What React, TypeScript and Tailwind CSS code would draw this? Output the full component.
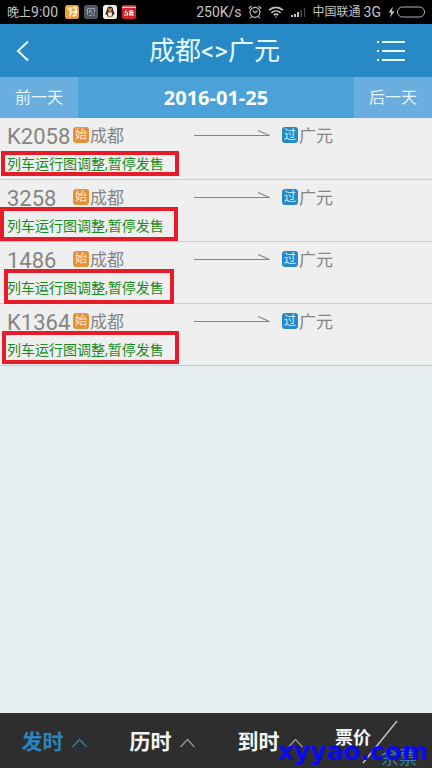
type Train = {
  no: string;
  from: string;
  to: string;
  notice: string;
  frame: string;
};

const NOTICE = "列车运行图调整,暂停发售";

const trains: Train[] = [
  { no: "K2058", from: "成都", to: "广元", notice: NOTICE, frame: "left-px top-[33px] w-[178px] h-[25px]" },
  { no: "3258", from: "成都", to: "广元", notice: NOTICE, frame: "left-0 top-[27px] w-[178px] h-[34px]" },
  { no: "1486", from: "成都", to: "广元", notice: NOTICE, frame: "left-1 top-[27px] w-[170px] h-[35px]" },
  { no: "K1364", from: "成都", to: "广元", notice: NOTICE, frame: "left-0.5 top-[27px] w-[177px] h-[33px]" },
];

const sorts = [
  { label: "发时", active: true },
  { label: "历时", active: false },
  { label: "到时", active: false },
];

function AppIcons() {
  return (
    <div className="flex gap-[5px] ml-[7px]">
      <svg width="14" height="14" viewBox="0 0 14 14">
        <rect width="14" height="14" rx="2.5" fill="#ee9d35" />
        <path d="M2.5 3.5h4L5 6.5l1 1-1.500 4M8 2.500h3v3L8.500 7h3L10 10.500H7.500" fill="none" stroke="#fdf1d2" strokeWidth="1.800" />
      </svg>
      <svg width="14" height="14" viewBox="0 0 14 14">
        <rect width="14" height="14" rx="2.500" fill="#4d5661" />
        <path d="M3.500 10V3.500h7v4M5.500 8V5.500H8M6.500 6.500l4 4.500M5 10.500h3" fill="none" stroke="#9aa3ad" strokeWidth="1" />
      </svg>
      <svg width="14" height="14" viewBox="0 0 14 14">
        <rect width="14" height="14" rx="2.500" fill="#f4f1ee" />
        <path d="M7 1.500c-2.200 0-3.200 1.700-3.100 3.800C3.300 6.500 2.300 8 2.600 9.400c.2.700.8.200 1-.1.300 1.600 1.500 2.700 3.400 2.700s3.100-1.100 3.400-2.700c.2.300.8.800 1 .1.300-1.400-.7-2.900-1.300-4.100C10.200 3.200 9.200 1.500 7 1.500z" fill="#33211c" />
        <ellipse cx="7" cy="9" rx="2.200" ry="2.400" fill="#f7eee6" />
        <circle cx="5.900" cy="4" r=".8" fill="#fff" />
        <circle cx="8.100" cy="4" r=".8" fill="#fff" />
        <path d="M4.200 6c1.800.9 3.800.9 5.600 0v1c-1.800.8-3.800.8-5.600 0z" fill="#c9442c" />
        <path d="M4 12h2.500M7.500 12H10M5.800 5.300h2.400" stroke="#eda12f" strokeWidth="1.200" />
      </svg>
      <svg width="14" height="14" viewBox="0 0 14 14">
        <rect width="14" height="14" rx="2" fill="#d5232d" />
        <path d="M0 2.300h14" stroke="#f6dcdc" strokeWidth="1.200" />
        <path d="M2 10h3.500V7M4.500 5.500L3 8M8 5v5M8 7.500h4M10 5v4.500M7 10h5" fill="none" stroke="#fff" strokeWidth="1.200" />
      </svg>
    </div>
  );
}

function StatusBar() {
  return (
    <div className="h-6 bg-black text-[#c4c4c4] flex items-center justify-between pl-[7px] pr-1.5 text-[12px]">
      <div className="flex items-center">
        <span>
          晚上<span className="text-[14px]">9:00</span>
        </span>
        <AppIcons />
      </div>
      <div className="flex items-center">
        <span className="text-[14px]">250K/s</span>
        <svg className="ml-1.5" width="14" height="14" viewBox="0 0 14 14" fill="none" stroke="#bdbdbd" strokeWidth="1.200">
          <circle cx="7" cy="7.300" r="5" />
          <path d="M4.800 5.800L7 7.800l2.500-2M.8 3.500L3.500 1M13.200 3.500L10.500 1M3.500 11.500l-1.300 1.700M10.500 11.500l1.300 1.700" />
        </svg>
        <svg className="ml-1.5" width="16" height="14" viewBox="0 0 16 14" fill="none" stroke="#c4c4c4" strokeWidth="1.600">
          <path d="M1 5.200c4-3.800 10-3.800 14 0M3.400 7.800c2.700-2.500 6.500-2.500 9.200 0M5.700 10.200c1.400-1.300 3.200-1.300 4.600 0" />
          <circle cx="8" cy="12" r=".8" fill="#c4c4c4" stroke="none" />
        </svg>
        <svg className="ml-1.5" width="16" height="12" viewBox="0 0 16 12">
          <path d="M1 9h2v2H1zM4 8h2v3H4zM7 6h2v5H7z" fill="#c4c4c4" />
          <path d="M10.500 4h1.500v7h-1.500zM14 2h1.200v9H14z" fill="#4a4a4a" />
        </svg>
        <span className="ml-[7px]">中国联通</span>
        <span className="ml-[3px] text-[14px]">3G</span>
        <svg className="ml-[7px]" width="38" height="12" viewBox="0 0 38 12">
          <path d="M5 .5L.5 6.500h2.600L2 11.500l4.500-6.300H3.800z" fill="#c4c4c4" />
          <rect x="9.500" y="1" width="27" height="10" rx="5" fill="none" stroke="#b5b5b5" />
        </svg>
      </div>
    </div>
  );
}

function TrainRow({ train }: { train: Train }) {
  return (
    <li className="relative h-[62px] border-b border-[#cccccc] bg-[#efefef] pl-[7px]">
      <div className="flex h-[34px] items-center text-[#858585]">
        <span className="w-[66px] pt-0.5 text-[22px]">{train.no}</span>
        <span className="flex size-4 items-center justify-center rounded-[3px] bg-[#e3913b] text-[12px] leading-4 text-[#fbe9cf]">始</span>
        <span className="w-[105px] pl-px pt-1 text-[17px]">{train.from}</span>
        <svg className="mb-1" width="76" height="8" viewBox="0 0 76 8" fill="none" stroke="#858585">
          <path d="M0 6.500h75.500L64 1.500" strokeWidth="1.200" />
        </svg>
        <span className="ml-3 flex size-4 items-center justify-center rounded-[3px] bg-[#2789c5] text-[12px] leading-4 text-[#dcf1fb]">过</span>
        <span className="pl-px pt-1 text-[17px]">{train.to}</span>
      </div>
      <p className="text-[14px] leading-6 text-[#178c23]">{train.notice}</p>
      <span className={`absolute border-4 border-[#e81c28] ${train.frame}`} />
    </li>
  );
}

export default function App() {
  return (
    <div className="flex min-h-screen flex-col bg-[#e6edf1] font-[Roboto,'Noto_Sans_CJK_SC',sans-serif]">
      <StatusBar />

      <header className="flex h-[53px] items-center justify-between bg-[#278ac6] pl-4 pr-[27px] text-[#e6fbff]">
        <button aria-label="返回" className="w-9">
          <svg width="14" height="22" viewBox="0 0 14 22" fill="none" stroke="currentColor" strokeWidth="2">
            <path d="M12 1.500L2 11l10 9.500" />
          </svg>
        </button>
        <h1 className="pt-0.5 text-[26px]">成都&lt;&gt;广元</h1>
        <button aria-label="菜单">
          <svg width="28" height="22" viewBox="0 0 28 22" fill="none" stroke="currentColor" strokeWidth="2">
            <path d="M0 2h2M0 11h2M0 20h2M5 2h23M5 11h23M5 20h23" />
          </svg>
        </button>
      </header>

      <div className="flex h-[41px] items-stretch bg-[#4ba1d8] text-[#e4f5fb]">
        <button className="w-[78px] bg-[#69aede] text-[16px]">前一天</button>
        <div className="flex flex-1 items-center justify-center font-['Open_Sans',sans-serif] text-[20px] font-bold text-white">2016-01-25</div>
        <button className="w-[78px] bg-[#69aede] text-[16px]">后一天</button>
      </div>

      <ul>
        {trains.map((t) => (
          <TrainRow key={t.no} train={t} />
        ))}
      </ul>

      <footer className="relative mt-auto grid h-[55px] grid-cols-4 bg-[#2e2e2e] text-[#f4f4f4]">
        {sorts.map((s) => (
          <button
            key={s.label}
            className={`flex items-center justify-center gap-2 pt-1 text-[21px] font-bold ${s.active ? "text-[#2d83bd]" : ""}`}
          >
            {s.label}
            <svg width="15" height="10" viewBox="0 0 15 10" fill="none" stroke={s.active ? "#3a80a8" : "#9a9a9a"} strokeWidth="1.200">
              <path d="M.5 9l7-7.500 7 7.500" />
            </svg>
          </button>
        ))}
        <button className="relative flex flex-col justify-end px-[11px] text-[18px] leading-5">
          <span className="self-start font-bold">票价</span>
          <span className="mr-1 self-end text-[#3a80a8]">余票</span>
          <svg className="absolute left-[38px] top-[7px]" width="36" height="44" viewBox="0 0 36 44">
            <path d="M1 43L35 1" stroke="#c2c2c2" strokeWidth="1.500" />
          </svg>
        </button>
        <span className="absolute bottom-1 right-1 font-['DejaVu_Sans',sans-serif] text-[25px] leading-6 font-bold text-[#0a0af0]">xyyao.com</span>
      </footer>
    </div>
  );
}
